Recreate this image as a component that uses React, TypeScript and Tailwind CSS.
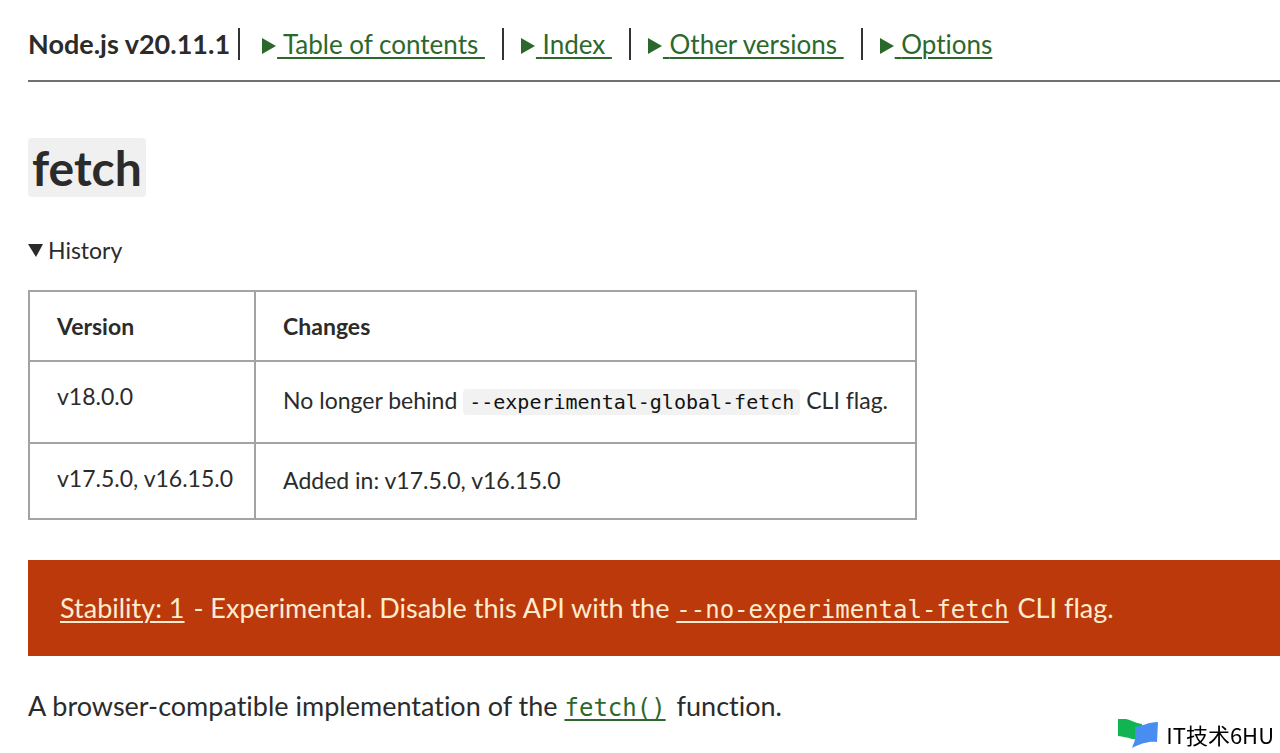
import React from "react";

const menus = ["Table of contents ", "Index ", "Other versions ", "Options"];

function Triangle({ className }: { className?: string }) {
  return (
    <svg viewBox="0 0 14 16" className={className} fill="currentColor" aria-hidden="true">
      <path d="M0 0L14 8L0 16Z" />
    </svg>
  );
}

function Header() {
  return (
    <header className="ml-7 pt-7 pb-5 border-b-2 border-[#707070]">
      <nav className="flex items-center whitespace-pre text-[26px] leading-8">
        <span className="pr-2 text-[27px] font-bold">Node.js v20.11.1</span>
        {menus.map((menu) => (
          <div key={menu} className="flex items-center border-l-2 border-[#333] px-[17px] first-of-type:pl-[22px]">
            <a href="#" className="flex items-center text-[#2c682c]">
              <Triangle className="h-4 w-3.5 mr-px mt-1" />
              <span className="underline decoration-2 underline-offset-3"> {menu}</span>
            </a>
          </div>
        ))}
      </nav>
    </header>
  );
}

function History() {
  return (
    <details open className="mt-[37px] text-[23px] leading-8">
      <summary className="flex items-center gap-1">
        <svg viewBox="0 0 16 13" className="h-[13px] w-4" fill="currentColor" aria-hidden="true">
          <path d="M0 0H15L8 13Z" />
        </svg>
        History
      </summary>
      <table className="mt-6 border-2 border-[#a3a3a3] border-collapse [&_td]:border-2 [&_td]:border-[#a3a3a3] [&_th]:border-2 [&_th]:border-[#a3a3a3] [&_td]:align-top [&_th]:text-left">
        <thead>
          <tr className="h-[70px]">
            <th className="pl-[27px] pr-[21px]">Version</th>
            <th className="px-[27px]">Changes</th>
          </tr>
        </thead>
        <tbody>
          <tr className="h-[82px]">
            <td className="pl-[27px] pr-[21px] pt-[18px]">v18.0.0</td>
            <td className="px-[27px] pt-[22px]">
              No longer behind{" "}
              <code className="rounded-sm bg-[#f2f2f2] px-1.5 py-px font-['DejaVu_Sans_Mono',monospace] text-[20px] text-[#111]">
                --experimental-global-fetch
              </code>{" "}
              CLI flag.
            </td>
          </tr>
          <tr className="h-[76px]">
            <td className="pl-[27px] pr-[21px] pt-[18px]">v17.5.0, v16.15.0</td>
            <td className="px-[27px] pt-5">Added in: v17.5.0, v16.15.0</td>
          </tr>
        </tbody>
      </table>
    </details>
  );
}

function Watermark() {
  return (
    <div className="fixed bottom-1 right-1.5 flex items-center gap-2 text-black">
      <svg viewBox="0 0 40 30" className="h-[30px] w-10" aria-hidden="true">
        <path d="M0 0H8C13 1 17 4 24 5V21L14 20C9 18 5 18 0 17Z" fill="#10b552" />
        <path d="M17 8C25 7 30 3 40 3L39 23C31 22 24 24 14 29L17 21Z" fill="#4a8df0" />
      </svg>
      <span className="font-['Noto_Sans_CJK_SC',sans-serif] text-[22px] leading-7">IT技术6HU</span>
    </div>
  );
}

export default function App() {
  return (
    <div className="min-h-screen bg-white font-[Lato,sans-serif] text-[#2b2b2b] [font-variant-ligatures:none]">
      <Header />
      <main className="ml-7">
        <h2 className="mt-14 text-[48px] font-bold leading-[59px]">
          <code className="inline-block rounded-sm bg-[#f0f0f0] px-1 font-[Lato,sans-serif]">fetch</code>
        </h2>
        <History />
        <div className="mt-10 bg-[#bb390b] p-8 text-[27px] leading-8 text-[#ffecd0]">
          <a href="#" className="underline decoration-2 underline-offset-3">Stability: 1</a>
          <span className="ml-0.5"> - Experimental. Disable this API with the </span>
          <a href="#" className="mr-0.5 font-['DejaVu_Sans_Mono',monospace] text-[24px] leading-none underline decoration-2 underline-offset-3">
            --no-experimental-fetch
          </a>{" "}
          CLI flag.
        </div>
        <p className="mt-[34px] text-[27px] leading-8">
          A browser-compatible implementation of the{" "}
          <a href="#" className="mr-1 font-['DejaVu_Sans_Mono',monospace] text-[24px] leading-none text-[#2c682c] underline decoration-2 underline-offset-3">
            fetch()
          </a>{" "}
          function.
        </p>
      </main>
      <Watermark />
    </div>
  );
}
